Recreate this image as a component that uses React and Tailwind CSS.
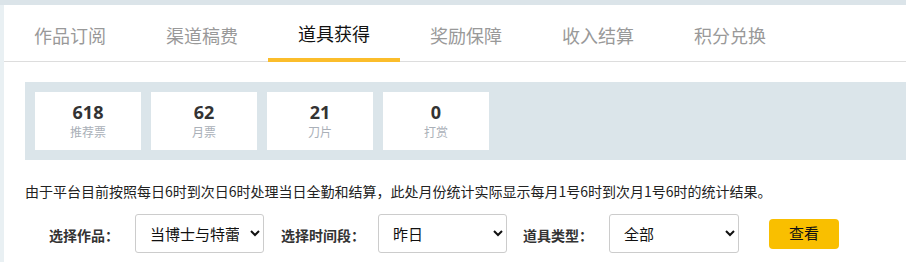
const tabs = ["作品订阅", "渠道稿费", "道具获得", "奖励保障", "收入结算", "积分兑换"];

const stats = [
  { value: "618", label: "推荐票" },
  { value: "62", label: "月票" },
  { value: "21", label: "刀片" },
  { value: "0", label: "打赏" },
];

const font = { fontFamily: '"Noto Sans CJK SC", "Noto Sans", sans-serif' };

const Select = ({ width, value, options }) => (
  <select
    defaultValue={value}
    className={`${width} h-[39px] rounded-[3px] border border-[#cccccc] bg-white pl-[10px] pr-[8px] text-[15px] text-[#111]`}
  >
    {options.map((o) => (
      <option key={o}>{o}</option>
    ))}
  </select>
);

export default function App() {
  return (
    <div className="w-[906px] h-[262px] overflow-hidden bg-[#eaf0f3]" style={font}>
      <div className="h-[5px] bg-[#dbe4e9]" />
      <div className="flex h-[257px]">
        <div className="w-[4px] bg-[#e9f0f3]" />
        <div className="flex-1 bg-white">
          {/* tabs */}
          <div className="flex h-[57px] border-b border-[#dddddd]">
            {tabs.map((t, i) => (
              <div
                key={t}
                className={`w-[132px] flex items-center justify-center pt-[4px] text-[18px] -mb-px ${
                  i === 2
                    ? "text-[#111] border-b-[4px] border-[#fbbd2b]"
                    : "text-[#999999]"
                }`}
              >
                {t}
              </div>
            ))}
          </div>

          {/* stats */}
          <div className="mt-[20px] ml-[21px] flex gap-[10px] bg-[#dbe5ea] p-[10px]">
            {stats.map((s) => (
              <div
                key={s.label}
                className="w-[106px] h-[58px] bg-white flex flex-col items-center pt-[8px]"
              >
                <div
                  className="text-[18px] font-bold leading-[24px] text-[#333]"
                  style={{ fontFamily: '"Open Sans", "Noto Sans", sans-serif' }}
                >
                  {s.value}
                </div>
                <div className="text-[12px] leading-[16px] text-[#aab0b8]">{s.label}</div>
              </div>
            ))}
          </div>

          {/* notice */}
          <p className="mt-[21px] ml-[21px] text-[14px] leading-[20px] text-[#222] whitespace-nowrap">
            由于平台目前按照每日6时到次日6时处理当日全勤和结算，此处月份统计实际显示每月1号6时到次月1号6时的统计结果。
          </p>

          {/* filters */}
          <div className="mt-[13px] ml-[45px] flex items-center text-[14px]">
            <span className="font-bold text-[#333] mr-[16px] pt-[4px]">选择作品：</span>
            <Select width="w-[129px]" value="当博士与特蕾西娅" options={["当博士与特蕾西娅"]} />
            <span className="font-bold text-[#333] ml-[17px] mr-[13px] pt-[4px]">选择时间段：</span>
            <Select width="w-[129px]" value="昨日" options={["昨日", "今日", "本月"]} />
            <span className="font-bold text-[#333] ml-[16px] mr-[16px] pt-[4px]">道具类型：</span>
            <Select width="w-[130px]" value="全部" options={["全部", "推荐票", "月票"]} />
            <button className="ml-[30px] w-[70px] h-[30px] rounded-[4px] bg-[#f9bf00] text-[15px] text-[#111]">
              查看
            </button>
          </div>
        </div>
      </div>
    </div>
  );
}
